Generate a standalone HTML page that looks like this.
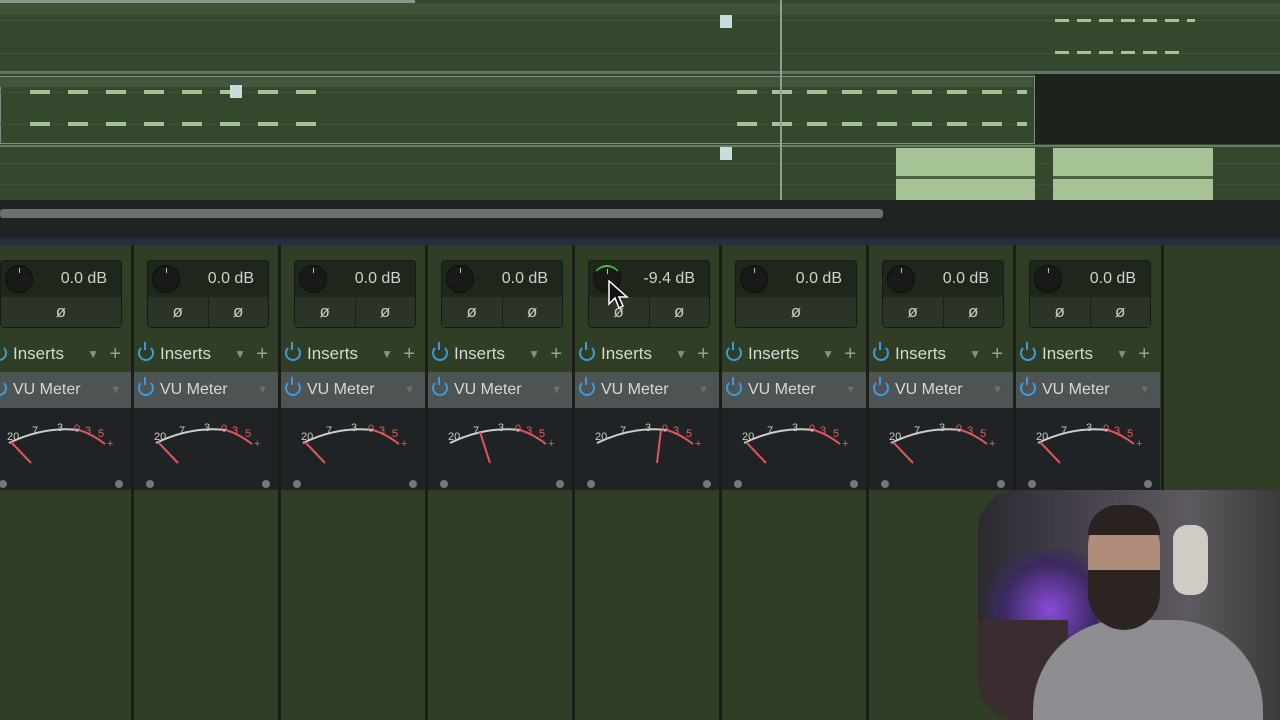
<!DOCTYPE html><html><head><style>
body{margin:0;width:1280px;height:720px;overflow:hidden;background:#2f3e25;font-family:"Liberation Sans",sans-serif;position:relative}
div{position:absolute;box-sizing:border-box}
.strip{top:245px;width:147px;height:475px;background:#2f3e25;border-left:3px solid #1a1e18}
.box{left:13px;top:15px;width:122px;height:68px;background:#1f261c;border-radius:4px;border:1px solid #151a13}
.knob{left:4px;top:4px;width:28px;height:28px;border-radius:50%;background:#171a16;border:1px solid #0c0e0b}
.knob:after{content:"";position:absolute;left:13px;top:2px;width:1px;height:5px;background:#bbb}
.db{right:14px;top:9px;color:#cfd3cc;font-size:16px}
.bot{left:0;top:36px;width:120px;height:30px;background:#2b3427;color:#c8ccc5;font-size:17px;text-align:center;line-height:30px;display:flex}
.bot span{flex:1}
.ins{top:95px;left:0;width:144px;height:28px;color:#d6d8d4;font-size:17px;line-height:28px}
.vu{top:127px;left:0;width:144px;height:36px;background:#4e5454;color:#d6d8d4;font-size:16px;line-height:36px}
.pw{display:inline-block;width:12px;height:12px;border:2.5px solid #3b9be0;border-radius:50%;border-top-color:transparent;position:relative;vertical-align:-2px;margin:0 6px 0 4px}
.pw:after{content:"";position:absolute;left:3.5px;top:-5px;width:2.5px;height:8px;background:#3b9be0}
.meter{top:163px;left:0;width:144px;height:82px;background:#1f2325}
.dot{top:72px;width:8px;height:8px;border-radius:50%;background:#777}
</style></head><body>
<div style="left:0;top:0;width:1280px;height:200px;background:#34482d"></div>
<div style="left:0;top:0;width:415px;height:3px;background:#8a9487"></div>
<div style="left:0;top:3px;width:1280px;height:12px;background:#3f5237"></div>
<div style="left:0;top:71px;width:1280px;height:3px;background:#5e7561"></div>
<div style="left:0;top:76px;width:1035px;height:68px;border:1px solid #7a8f7f;background:#34482d"></div>
<div style="left:0;top:77px;width:1033px;height:10px;background:#43553c"></div>
<div style="left:1035px;top:74px;width:245px;height:70px;background:#1d221c"></div>
<div style="left:0;top:145px;width:1280px;height:2px;background:#6a7f6c"></div>
<div style="left:0;top:20px;width:1280px;height:1px;background:#3f5537"></div>
<div style="left:0;top:53px;width:1280px;height:1px;background:#3f5537"></div>
<div style="left:0;top:92px;width:1035px;height:1px;background:#3f5537"></div>
<div style="left:0;top:124px;width:1035px;height:1px;background:#3f5537"></div>
<div style="left:0;top:163px;width:1280px;height:1px;background:#3f5537"></div>
<div style="left:0;top:184px;width:1280px;height:1px;background:#3f5537"></div>
<div style="left:30px;top:90px;width:290px;height:4px;background:repeating-linear-gradient(90deg,#a8c298 0 20px,transparent 20px 38px)"></div>
<div style="left:30px;top:122px;width:290px;height:4px;background:repeating-linear-gradient(90deg,#a8c298 0 20px,transparent 20px 38px)"></div>
<div style="left:737px;top:90px;width:290px;height:4px;background:repeating-linear-gradient(90deg,#a8c298 0 20px,transparent 20px 35px)"></div>
<div style="left:737px;top:122px;width:290px;height:4px;background:repeating-linear-gradient(90deg,#a8c298 0 20px,transparent 20px 35px)"></div>
<div style="left:1055px;top:19px;width:140px;height:3px;background:repeating-linear-gradient(90deg,#a8c298 0 14px,transparent 14px 22px)"></div>
<div style="left:1055px;top:51px;width:130px;height:3px;background:repeating-linear-gradient(90deg,#a8c298 0 14px,transparent 14px 22px)"></div>
<div style="left:230px;top:85px;width:12px;height:13px;background:#c8dcdc"></div>
<div style="left:720px;top:15px;width:12px;height:13px;background:#c8dcdc"></div>
<div style="left:720px;top:147px;width:12px;height:13px;background:#c8dcdc"></div>
<div style="left:896px;top:148px;width:139px;height:52px;background:#a6c396"></div>
<div style="left:1053px;top:148px;width:160px;height:52px;background:#a6c396"></div>
<div style="left:896px;top:176px;width:139px;height:3px;background:#4a6040"></div>
<div style="left:1053px;top:176px;width:160px;height:3px;background:#4a6040"></div>
<div style="left:780px;top:0;width:2px;height:200px;background:#8e9f92"></div>
<div style="left:0;top:200px;width:1280px;height:40px;background:#1f2422"></div>
<div style="left:0;top:209px;width:883px;height:9px;background:#6c706f;border-radius:3px"></div>
<div style="left:0;top:238px;width:1280px;height:7px;background:#26303a"></div>
<div style="left:1161px;top:245px;width:119px;height:475px;background:#2f3e25;border-left:3px solid #1a1e18"></div>
<script>
var h="";
for(var k=0;k<8;k++){var L=-16+147*k;var db=k==4?"-9.4 dB":"0.0 dB";
var one=(k==0||k==5);
h+='<div class="strip" style="left:'+L+'px"><div class="box"><div class="knob"'+(k==4?' style="border-top:2px solid #3c3"':'')+'></div><div class="db">'+db+'</div><div class="bot">'+(one?'<span>ø</span>':'<span style="border-right:1px solid #1a2118">ø</span><span>ø</span>')+'</div></div>'+
'<div class="ins"><span class="pw"></span>Inserts<span style="position:absolute;right:32px;color:#8a8f88;font-size:12px">▼</span><span style="position:absolute;right:10px;color:#9ba098;font-size:20px">+</span></div>'+
'<div class="vu"><span class="pw"></span>VU Meter<span style="position:absolute;right:10px;color:#6a6f70;font-size:11px">▼</span></div>'+
'<div class="meter"><svg width="144" height="70" style="position:absolute;left:0;top:0"><path d="M22 35 Q57 18 92 22" stroke="#ccc" stroke-width="2" fill="none"/><path d="M92 22 Q105 26 118 36" stroke="#e05555" stroke-width="2" fill="none"/>'+
'<text x="20" y="32" fill="#ccc" font-size="11" font-family="Liberation Sans">20</text><text x="45" y="26" fill="#ccc" font-size="11" font-family="Liberation Sans">7</text><text x="70" y="23" fill="#ccc" font-size="11" font-family="Liberation Sans">3</text><text x="87" y="24" fill="#e06060" font-size="11" font-family="Liberation Sans">0</text><text x="98" y="26" fill="#e06060" font-size="11" font-family="Liberation Sans">3</text><text x="111" y="29" fill="#e06060" font-size="11" font-family="Liberation Sans">5</text><text x="120" y="39" fill="#e06060" font-size="11">+</text>'+
(k==4?'<path d="M82 55 L86 22" stroke="#e05555" stroke-width="2"/>':k==3?'<path d="M62 55 L52 24" stroke="#e05555" stroke-width="2"/>':'<path d="M44 55 L24 34" stroke="#e05555" stroke-width="2"/>')+
'</svg><div class="dot" style="left:12px"></div><div class="dot" style="left:128px"></div></div></div>';}
document.write(h);
</script>
<svg style="position:absolute;left:608px;top:280px" width="22" height="32"><path d="M1 1 L1 24 L7 18 L11 28 L15 26 L11 17 L19 17 Z" fill="#111" stroke="#fff" stroke-width="1.5"/></svg>
<div style="left:978px;top:490px;width:302px;height:230px;border-radius:40px 0 0 40px;overflow:hidden;background:linear-gradient(90deg,#2a2a30,#4a4550 40%,#5d5a5e 70%,#3d3a3c)">
<div style="left:0;top:60px;width:120px;height:100px;background:radial-gradient(circle at 60% 60%,#8a4bd8,#3b2a60 50%,transparent 75%)"></div>
<div style="left:0;top:130px;width:90px;height:100px;background:#3a2d30"></div>
<div style="left:55px;top:130px;width:230px;height:110px;border-radius:90px 90px 0 0;background:#8e8e92"></div>
<div style="left:110px;top:20px;width:72px;height:110px;border-radius:36px;background:#b08c7a"></div>
<div style="left:110px;top:80px;width:72px;height:60px;border-radius:0 0 36px 36px;background:#2d2522"></div>
<div style="left:110px;top:15px;width:72px;height:30px;border-radius:36px 36px 0 0;background:#2a2220"></div>
<div style="left:195px;top:35px;width:35px;height:70px;background:#d0cbc4;border-radius:14px"></div>
</div>
</body></html>
